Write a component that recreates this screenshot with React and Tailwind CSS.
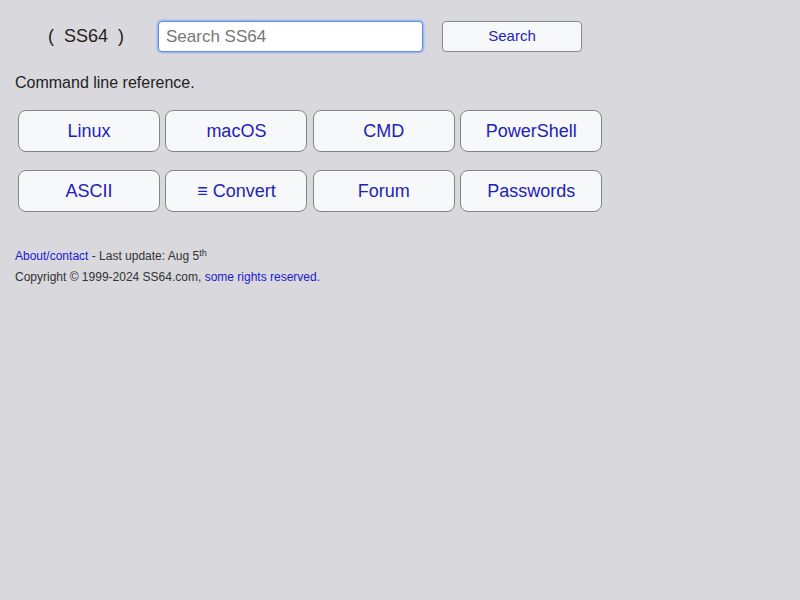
import React from 'react';

const tiles = [
  ['Linux', 'macOS', 'CMD', 'PowerShell'],
  ['ASCII', '≡ Convert', 'Forum', 'Passwords'],
];

export default function App() {
  return (
    <div className="min-h-screen bg-[#d9d8dd] font-['Liberation_Sans',Arial,sans-serif] text-[#222]">
      <div className="px-[15px] pt-[21px]">
        {/* Header */}
        <div className="flex items-center h-[31px]">
          <div className="w-[143px] pl-[33px] text-[18px] text-[#222]">
            (&nbsp; SS64 &nbsp;)
          </div>
          <input
            className="w-[265px] h-[31px] rounded-[4px] border border-[#5b8ef0] bg-white px-[7px] text-[17px] text-[#222] placeholder-[#777] outline-none shadow-[0_0_2px_1px_rgba(90,140,240,0.6)]"
            placeholder="Search SS64"
          />
          <button className="ml-[19px] w-[140px] h-[31px] rounded-[4px] border border-[#8a8a8a] bg-[#f7f8fa] text-[15px] text-[#2424b8]">
            Search
          </button>
        </div>

        <p className="mt-[21px] text-[16px] leading-[20px]">Command line reference.</p>

        {/* Tiles */}
        <div className="mt-[17px] flex flex-col gap-[18px] pl-[3px]">
          {tiles.map((row, i) => (
            <div key={i} className="flex gap-[5.4px]">
              {row.map((t) => (
                <a
                  key={t}
                  href="#"
                  className="w-[142px] h-[42px] flex items-center justify-center rounded-[8px] border border-[#858585] bg-[#f7f8fa] text-[18px] text-[#2222b8]"
                >
                  {t}
                </a>
              ))}
            </div>
          ))}
        </div>

        {/* Footer */}
        <div className="mt-[34px] text-[12px] leading-[21px] text-[#333]">
          <p>
            <a href="#" className="text-[#1a1ad0]">About/contact</a> - Last update: Aug 5
            <sup className="text-[9px]">th</sup>
          </p>
          <p>
            Copyright © 1999-2024 SS64.com, <a href="#" className="text-[#1a1ad0]">some rights reserved.</a>
          </p>
        </div>
      </div>
    </div>
  );
}
